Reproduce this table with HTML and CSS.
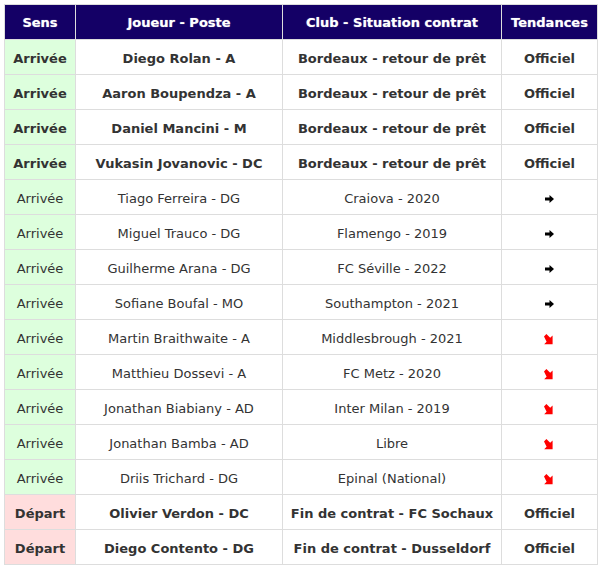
FILE: index.html
```html
<!DOCTYPE html>
<html lang="fr">
<head>
<meta charset="utf-8">
<title>Mercato</title>
<link rel="stylesheet" href="styles.css">
</head>
<body>
<table class="mercato">
  <colgroup>
    <col class="c1"><col class="c2"><col class="c3"><col class="c4">
  </colgroup>
  <thead>
    <tr><th>Sens</th><th>Joueur - Poste</th><th>Club - Situation contrat</th><th>Tendances</th></tr>
  </thead>
  <tbody>
    <tr class="strong"><td class="in">Arrivée</td><td>Diego Rolan - A</td><td>Bordeaux - retour de prêt</td><td>Officiel</td></tr>
    <tr class="strong"><td class="in">Arrivée</td><td>Aaron Boupendza - A</td><td>Bordeaux - retour de prêt</td><td>Officiel</td></tr>
    <tr class="strong"><td class="in">Arrivée</td><td>Daniel Mancini - M</td><td>Bordeaux - retour de prêt</td><td>Officiel</td></tr>
    <tr class="strong"><td class="in">Arrivée</td><td>Vukasin Jovanovic - DC</td><td>Bordeaux - retour de prêt</td><td>Officiel</td></tr>
    <tr><td class="in">Arrivée</td><td>Tiago Ferreira - DG</td><td>Craiova - 2020</td><td><svg class="arr" viewBox="0 0 9 8"><path d="M0 2.5H4.5V0L9 4L4.5 8V5.5H0Z"/></svg></td></tr>
    <tr><td class="in">Arrivée</td><td>Miguel Trauco - DG</td><td>Flamengo - 2019</td><td><svg class="arr" viewBox="0 0 9 8"><path d="M0 2.5H4.5V0L9 4L4.5 8V5.5H0Z"/></svg></td></tr>
    <tr><td class="in">Arrivée</td><td>Guilherme Arana - DG</td><td>FC Séville - 2022</td><td><svg class="arr" viewBox="0 0 9 8"><path d="M0 2.5H4.5V0L9 4L4.5 8V5.5H0Z"/></svg></td></tr>
    <tr><td class="in">Arrivée</td><td>Sofiane Boufal - MO</td><td>Southampton - 2021</td><td><svg class="arr" viewBox="0 0 9 8"><path d="M0 2.5H4.5V0L9 4L4.5 8V5.5H0Z"/></svg></td></tr>
    <tr><td class="in">Arrivée</td><td>Martin Braithwaite - A</td><td>Middlesbrough - 2021</td><td><svg class="arr down" viewBox="0 0 11 11"><path d="M0 2.4L2.4 0L6.2 3.8L8.6 1.4V10.2H0.2L2.6 7.8Z"/></svg></td></tr>
    <tr><td class="in">Arrivée</td><td>Matthieu Dossevi - A</td><td>FC Metz - 2020</td><td><svg class="arr down" viewBox="0 0 11 11"><path d="M0 2.4L2.4 0L6.2 3.8L8.6 1.4V10.2H0.2L2.6 7.8Z"/></svg></td></tr>
    <tr><td class="in">Arrivée</td><td>Jonathan Biabiany - AD</td><td>Inter Milan - 2019</td><td><svg class="arr down" viewBox="0 0 11 11"><path d="M0 2.4L2.4 0L6.2 3.8L8.6 1.4V10.2H0.2L2.6 7.8Z"/></svg></td></tr>
    <tr><td class="in">Arrivée</td><td>Jonathan Bamba - AD</td><td>Libre</td><td><svg class="arr down" viewBox="0 0 11 11"><path d="M0 2.4L2.4 0L6.2 3.8L8.6 1.4V10.2H0.2L2.6 7.8Z"/></svg></td></tr>
    <tr><td class="in">Arrivée</td><td>Driis Trichard - DG</td><td>Epinal (National)</td><td><svg class="arr down" viewBox="0 0 11 11"><path d="M0 2.4L2.4 0L6.2 3.8L8.6 1.4V10.2H0.2L2.6 7.8Z"/></svg></td></tr>
    <tr class="strong"><td class="out">Départ</td><td>Olivier Verdon - DC</td><td>Fin de contrat - FC Sochaux</td><td>Officiel</td></tr>
    <tr class="strong"><td class="out">Départ</td><td>Diego Contento - DG</td><td>Fin de contrat - Dusseldorf</td><td>Officiel</td></tr>
  </tbody>
</table>
</body>
</html>
```
FILE: styles.css
```css
html, body {
  margin: 0;
  padding: 0;
  background: #ffffff;
}
body {
  padding: 4px;
  font-family: "DejaVu Sans", Verdana, sans-serif;
  font-size: 13px;
  color: #333333;
}
.mercato {
  border-collapse: collapse;
  table-layout: fixed;
  width: 593px;
}
.c1 { width: 71px; }
.c2 { width: 207px; }
.c3 { width: 219px; }
.c4 { width: 96px; }
.mercato th,
.mercato td {
  border: 1px solid #dddddd;
  height: 35px;
  padding: 0;
  text-align: center;
  vertical-align: middle;
  white-space: nowrap;
  box-sizing: border-box;
}
.mercato td {
  padding-top: 2px;
}
.mercato th {
  background: #140066;
  color: #ffffff;
  font-weight: bold;
  font-size: 13px;
  text-shadow: 0 0 1px rgba(255,255,255,0.6);
}
.mercato .strong td {
  font-weight: bold;
}
.mercato td.in {
  background: #ddffdd;
}
.mercato td.out {
  background: #ffdddd;
}
.arr {
  width: 9px;
  height: 8px;
  display: inline-block;
  vertical-align: middle;
  fill: #000000;
}
.arr.down {
  width: 11px;
  height: 11px;
  fill: #ff0000;
}
```
